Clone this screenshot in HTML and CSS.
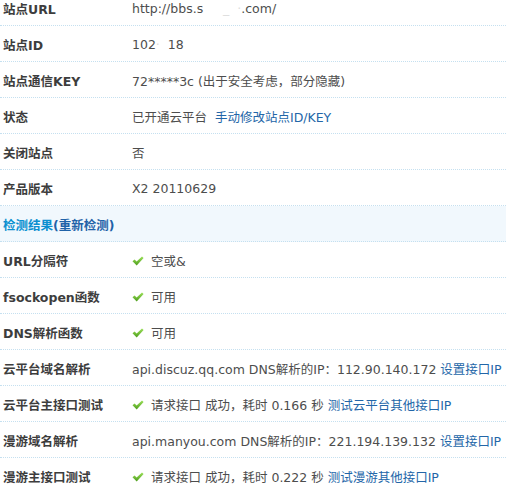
FILE: index.html
```html
<!DOCTYPE html>
<html>
<head>
<meta charset="utf-8">
<link rel="stylesheet" href="styles.css">
</head>
<body>
<div class="tbl">
  <div class="row"><div class="lbl">站点URL</div><div class="val">http://bbs.s<span class="blur">&nbsp;&nbsp;&nbsp;&nbsp;&nbsp;_&nbsp;&nbsp;·</span>.com/</div></div>
  <div class="row"><div class="lbl">站点ID</div><div class="val">102<span class="blur">·&nbsp;&nbsp;</span>18</div></div>
  <div class="row"><div class="lbl">站点通信KEY</div><div class="val">72*****3c (出于安全考虑，部分隐藏)</div></div>
  <div class="row"><div class="lbl">状态</div><div class="val">已开通云平台&nbsp; <a class="lnk">手动修改站点ID/KEY</a></div></div>
  <div class="row"><div class="lbl">关闭站点</div><div class="val">否</div></div>
  <div class="row"><div class="lbl">产品版本</div><div class="val">X2 20110629</div></div>
  <div class="row head"><div class="lbl"><span class="hl">检测结果</span><span class="hd">(重新检测)</span></div></div>
  <div class="row"><div class="lbl">URL分隔符</div><div class="val"><svg class="ok" viewBox="0 0 12 10"><defs><linearGradient id="g" x1="0" y1="0" x2="0" y2="1"><stop offset="0" stop-color="#9be05a"/><stop offset="1" stop-color="#4e9e1c"/></linearGradient></defs><path d="M0.5 5.2 L2.6 3.6 L4.6 5.6 L10 0.6 L11.6 2 L4.7 9.4 Z" fill="url(#g)"/></svg>空或&amp;</div></div>
  <div class="row"><div class="lbl">fsockopen函数</div><div class="val"><svg class="ok" viewBox="0 0 12 10"><path d="M0.5 5.2 L2.6 3.6 L4.6 5.6 L10 0.6 L11.6 2 L4.7 9.4 Z" fill="url(#g)"/></svg>可用</div></div>
  <div class="row"><div class="lbl">DNS解析函数</div><div class="val"><svg class="ok" viewBox="0 0 12 10"><path d="M0.5 5.2 L2.6 3.6 L4.6 5.6 L10 0.6 L11.6 2 L4.7 9.4 Z" fill="url(#g)"/></svg>可用</div></div>
  <div class="row"><div class="lbl">云平台域名解析</div><div class="val">api.discuz.qq.com DNS解析的IP：112.90.140.172 <a class="lnk">设置接口IP</a></div></div>
  <div class="row"><div class="lbl">云平台主接口测试</div><div class="val"><svg class="ok" viewBox="0 0 12 10"><path d="M0.5 5.2 L2.6 3.6 L4.6 5.6 L10 0.6 L11.6 2 L4.7 9.4 Z" fill="url(#g)"/></svg>请求接口 成功，耗时 0.166 秒 <a class="lnk">测试云平台其他接口IP</a></div></div>
  <div class="row"><div class="lbl">漫游域名解析</div><div class="val">api.manyou.com DNS解析的IP：221.194.139.132 <a class="lnk">设置接口IP</a></div></div>
  <div class="row"><div class="lbl">漫游主接口测试</div><div class="val"><svg class="ok" viewBox="0 0 12 10"><path d="M0.5 5.2 L2.6 3.6 L4.6 5.6 L10 0.6 L11.6 2 L4.7 9.4 Z" fill="url(#g)"/></svg>请求接口 成功，耗时 0.222 秒 <a class="lnk">测试漫游其他接口IP</a></div></div>
</div>
</body>
</html>
```
FILE: styles.css
```css
html, body {
  margin: 0;
  padding: 0;
  background: #fff;
  overflow: hidden;
}
.tbl {
  margin-top: -10px;
  font-family: "DejaVu Sans", "Noto Sans CJK SC", sans-serif;
  font-size: 12.5px;
}
.row {
  display: flex;
  align-items: center;
  box-sizing: border-box;
  height: 36px;
  padding-top: 2px;
  border-bottom: 1px dotted #c5e0f0;
}
.row.head {
  background: #f1f8fd;
}
.lbl {
  width: 129px;
  padding-left: 3px;
  flex: none;
  font-weight: bold;
  color: #3d3d3d;
  white-space: nowrap;
}
.val {
  display: flex;
  align-items: center;
  color: #4d4d4d;
  white-space: pre;
}
.blur {
  color: #ddd;
}
.lnk {
  color: #2366a8;
  text-decoration: none;
}
.hl {
  color: #0b8fd0;
}
.hd {
  color: #1f62a8;
}
.ok {
  width: 12px;
  height: 10px;
  margin-right: 7px;
  flex: none;
}
```
